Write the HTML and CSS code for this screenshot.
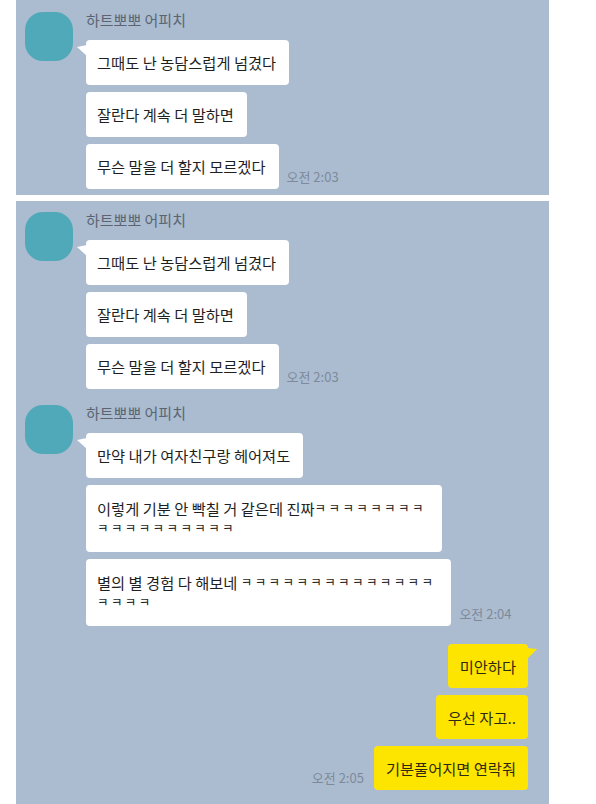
FILE: index.html
```html
<!DOCTYPE html>
<html>
	<head>
		<title>하트뽀뽀 어피치</title>
		<meta charset="utf-8"/>
		<link rel="stylesheet" href="styles.css">
	</head>
	<body>
		<div class="shot shotTop">
			<div class="group">
				<div class="avatar"></div>
				<div class="msgs">
					<div class="name">하트뽀뽀 어피치</div>
					<div class="row"><div class="bubble first">그때도 난 농담스럽게 넘겼다</div></div>
					<div class="row"><div class="bubble">잘란다 계속 더 말하면</div></div>
					<div class="row"><div class="bubble">무슨 말을 더 할지 모르겠다</div><span class="time">오전 2:03</span></div>
				</div>
			</div>
		</div>

		<div class="shot shotBottom">
			<div class="group">
				<div class="avatar"></div>
				<div class="msgs">
					<div class="name">하트뽀뽀 어피치</div>
					<div class="row"><div class="bubble first">그때도 난 농담스럽게 넘겼다</div></div>
					<div class="row"><div class="bubble">잘란다 계속 더 말하면</div></div>
					<div class="row"><div class="bubble">무슨 말을 더 할지 모르겠다</div><span class="time">오전 2:03</span></div>
				</div>
			</div>
			<div class="group">
				<div class="avatar"></div>
				<div class="msgs">
					<div class="name">하트뽀뽀 어피치</div>
					<div class="row"><div class="bubble first">만약 내가 여자친구랑 헤어져도</div></div>
					<div class="row"><div class="bubble wrapped">이렇게 기분 안 빡칠 거 같은데 진짜<span class="kk">ㅋㅋㅋㅋㅋㅋㅋㅋ</span><br><span class="kk">ㅋㅋㅋㅋㅋㅋㅋㅋㅋㅋ</span></div></div>
					<div class="row"><div class="bubble wrapped">별의 별 경험 다 해보네 <span class="kk">ㅋㅋㅋㅋㅋㅋㅋㅋㅋㅋㅋㅋㅋㅋ</span><br><span class="kk">ㅋㅋㅋㅋ</span></div><span class="time">오전 2:04</span></div>
				</div>
			</div>
			<div class="mine">
				<div class="row"><div class="bubble first">미안하다</div></div>
				<div class="row"><div class="bubble">우선 자고..</div></div>
				<div class="row"><span class="time">오전 2:05</span><div class="bubble">기분풀어지면 연락줘</div></div>
			</div>
		</div>
	</body>
</html>
```

FILE: styles.css
```css
html { width:100%; height:100%; }
body {
	margin: 0px;
	background: #ffffff;
	color: #1f1f1f;
	font-family: "Noto Sans CJK KR", "Noto Sans", sans-serif;
	overflow: hidden;
}

.shot {
	width: 533px;
	margin-left: 16px;
	background: #abbcd1;
	box-sizing: border-box;
	display: flex;
	flex-direction: column;
}
.shotTop {
	height: 195px;
	padding-top: 12px;
}
.shotBottom {
	margin-top: 6px;
	height: 620px;
	padding-top: 11px;
	gap: 16px;
}

.group {
	display: flex;
	padding-left: 9px;
}
.avatar {
	width: 48px;
	height: 49px;
	border-radius: 18px;
	background: #4fa9b8;
	flex-shrink: 0;
}
.msgs {
	margin-left: 13px;
	display: flex;
	flex-direction: column;
	gap: 7px;
}
.name {
	font-size: 15px;
	line-height: 18px;
	color: #5b6571;
	margin-top: -1px;
	margin-bottom: 4px;
}

.row {
	display: flex;
	align-items: flex-end;
	gap: 8px;
}
.bubble {
	position: relative;
	background: #ffffff;
	border-radius: 4px;
	padding: 12px 13px 13px 11px;
	font-size: 15.3px;
	line-height: 20px;
	white-space: nowrap;
}
.bubble.wrapped {
	padding: 13px 16px 14px 11px;
	line-height: 20px;
}
.msgs .bubble.first::before {
	content: "";
	position: absolute;
	left: -9px;
	top: 5px;
	width: 10px;
	height: 11px;
	background: #ffffff;
	clip-path: polygon(0 2px, 100% 0, 100% 100%);
}
.kk {
	display: inline-block;
	height: 20px;
	vertical-align: top;
	font-size: 12.5px;
	line-height: 20px;
	letter-spacing: 2.4px;
}
.time {
	font-size: 13px;
	line-height: 16px;
	color: #7e8a99;
	padding-bottom: 4px;
	white-space: nowrap;
}

.mine {
	display: flex;
	flex-direction: column;
	align-items: flex-end;
	gap: 7px;
	padding-right: 21px;
	margin-top: 2px;
}
.mine .row {
	gap: 10px;
}
.mine .bubble {
	background: #fee500;
	color: #2e2a12;
	padding: 12px 12px 12px 12px;
}
.mine .bubble.first::after {
	content: "";
	position: absolute;
	right: -9px;
	top: 4px;
	width: 10px;
	height: 11px;
	background: #fee500;
	clip-path: polygon(0 0, 100% 1px, 0 100%);
}
```
